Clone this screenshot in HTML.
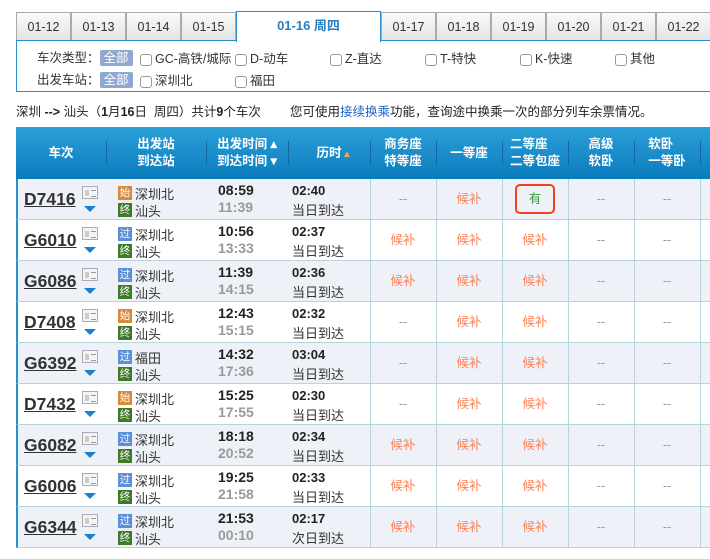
<!DOCTYPE html>
<html><head><meta charset="utf-8"><style>
*{margin:0;padding:0;box-sizing:border-box}
body{width:710px;height:559px;overflow:hidden;background:#fff;font-family:"Liberation Sans","Noto Sans CJK SC",sans-serif;font-size:12.5px;color:#333;position:relative}
.a{position:absolute}
.tab{position:absolute;top:12px;height:29px;width:55px;background:linear-gradient(#fafafa,#e3e3e3);border:1px solid #aaa;border-bottom:none;text-align:center;line-height:28px;font-size:12.5px;color:#333}
.filt{position:absolute;left:16px;top:40px;width:720px;height:52px;border:1px solid #2a8fc8}
.cb{display:inline-block;width:12px;height:12px;border:1px solid #999;border-radius:3px;vertical-align:-3px;margin-right:3px;background:#fff}
.all{display:inline-block;background:#8ea8d2;color:#fff;padding:0 4px;line-height:16px;border-radius:2px}
.hd{position:absolute;left:16px;top:127px;width:700px;height:52px;background:linear-gradient(#2ca0d8,#0a7bbd);color:#fff;font-weight:bold;font-size:12.5px}
.hd div{position:absolute;top:0;height:52px;display:flex;flex-direction:column;justify-content:center;align-items:center;line-height:17px}
.sep{position:absolute;top:14px;width:1px;height:24px;background:#1768a0}
.row{position:absolute;left:16px;width:700px;height:41px;border-bottom:1px solid #b9d3dc;border-left:2px solid #2a8fc8}
.row.s{background:#eef1f8}
.vl{position:absolute;top:0;width:1px;height:41px;background:#b9d3dc}
.tn{position:absolute;left:6px;top:10px;font-size:17.5px;font-weight:bold;text-decoration:underline;color:#333}
.card{position:absolute;left:64px;top:7px;width:16px;height:13px;border:1px solid #aab;background:#f4f4f4}
.card:before{content:"";position:absolute;left:2px;top:3px;width:4px;height:6px;background:#ccc}
.card:after{content:"";position:absolute;left:8px;top:3px;width:5px;height:5px;border-top:1px solid #999;border-bottom:1px solid #999}
.arr{position:absolute;left:66px;top:27px;width:0;height:0;border-left:6px solid transparent;border-right:6px solid transparent;border-top:6px solid #1a7fd0}
.ic{position:absolute;left:100px;width:14px;height:14px;font-size:10.5px;line-height:14px;text-align:center;color:#fff}
.st{position:absolute;left:117px;font-size:13px;color:#333}
.t1{position:absolute;left:200px;top:3px;font-size:14px;font-weight:bold;color:#222}
.t2{position:absolute;left:200px;top:20px;font-size:14px;font-weight:bold;color:#999}
.d1{position:absolute;left:274px;top:4px;font-size:13px;font-weight:bold;color:#222}
.d2{position:absolute;left:274px;top:21px;font-size:13px;color:#333}
.c{position:absolute;top:0;width:66px;height:41px;line-height:40px;text-align:center;font-size:12.5px}
.h{color:#ff7f50}.n{color:#999}
</style></head><body>
<div class="tab" style="left:16px">01-12</div>
<div class="tab" style="left:71px">01-13</div>
<div class="tab" style="left:126px">01-14</div>
<div class="tab" style="left:181px">01-15</div>
<div class="a" style="left:236px;top:11px;width:145px;height:31px;background:#fff;border:1px solid #2a8fc8;border-bottom:none;z-index:2;text-align:center;line-height:28px;color:#2a7fc0;font-weight:bold;font-size:13px">01-16 周四</div>
<div class="tab" style="left:381px">01-17</div>
<div class="tab" style="left:436px">01-18</div>
<div class="tab" style="left:491px">01-19</div>
<div class="tab" style="left:546px">01-20</div>
<div class="tab" style="left:601px">01-21</div>
<div class="tab" style="left:656px">01-22</div>
<div class="filt"></div>
<div class="a" style="left:37px;top:47px">车次类型：<span class="all">全部</span></div>
<div class="a" style="left:140px;top:48px"><span class="cb"></span>GC-高铁/城际</div>
<div class="a" style="left:235px;top:48px"><span class="cb"></span>D-动车</div>
<div class="a" style="left:330px;top:48px"><span class="cb"></span>Z-直达</div>
<div class="a" style="left:425px;top:48px"><span class="cb"></span>T-特快</div>
<div class="a" style="left:520px;top:48px"><span class="cb"></span>K-快速</div>
<div class="a" style="left:615px;top:48px"><span class="cb"></span>其他</div>
<div class="a" style="left:37px;top:69px">出发车站：<span class="all">全部</span></div>
<div class="a" style="left:140px;top:70px"><span class="cb"></span>深圳北</div>
<div class="a" style="left:235px;top:70px"><span class="cb"></span>福田</div>
<div class="a" style="left:16px;top:101px;font-size:12.5px;color:#222">深圳 <b>--&gt;</b> 汕头（<b>1</b>月<b>16</b>日&nbsp; 周四）共计<b>9</b>个车次</div>
<div class="a" style="left:290px;top:101px;font-size:12.5px;color:#222">您可使用<span style="color:#2266cc">接续换乘</span>功能，查询途中换乘一次的部分列车余票情况。</div>
<div class="hd">
<div style="left:0;width:90px">车次</div><span class="sep" style="left:90px"></span>
<div style="left:90px;width:100px">出发站<br>到达站</div><span class="sep" style="left:190px"></span>
<div style="left:190px;width:82px">出发时间 ▴<br>到达时间 ▾</div><span class="sep" style="left:272px"></span>
<div style="left:272px;width:82px">历时 <span style="color:#f4a460;font-size:10px;position:absolute;left:54px;top:19px">▲</span></div><span class="sep" style="left:354px"></span>
<div style="left:354px;width:66px">商务座<br>特等座</div><span class="sep" style="left:420px"></span>
<div style="left:420px;width:66px">一等座</div><span class="sep" style="left:486px"></span>
<div style="left:486px;width:66px">二等座<br>二等包座</div><span class="sep" style="left:552px"></span>
<div style="left:552px;width:66px">高级<br>软卧</div><span class="sep" style="left:618px"></span>
<div style="left:618px;width:66px">软卧<br>一等卧</div><span class="sep" style="left:684px"></span>
</div>
<div id="rows"></div>
<script>
var R=[["D7416","始","深圳北","08:59","11:39","02:40","当日到达",["--","候补","有","--","--"]],
["G6010","过","深圳北","10:56","13:33","02:37","当日到达",["候补","候补","候补","--","--"]],
["G6086","过","深圳北","11:39","14:15","02:36","当日到达",["候补","候补","候补","--","--"]],
["D7408","始","深圳北","12:43","15:15","02:32","当日到达",["--","候补","候补","--","--"]],
["G6392","过","福田","14:32","17:36","03:04","当日到达",["--","候补","候补","--","--"]],
["D7432","始","深圳北","15:25","17:55","02:30","当日到达",["--","候补","候补","--","--"]],
["G6082","过","深圳北","18:18","20:52","02:34","当日到达",["候补","候补","候补","--","--"]],
["G6006","过","深圳北","19:25","21:58","02:33","当日到达",["候补","候补","候补","--","--"]],
["G6344","过","深圳北","21:53","00:10","02:17","次日到达",["候补","候补","候补","--","--"]]];
var h="";
R.forEach(function(r,i){
var top=179+i*41;
h+='<div class="row'+(i%2==0?' s':'')+'" style="top:'+top+'px">';
h+='<span class="tn">'+r[0]+'</span><span class="card"></span><span class="arr"></span>';
var bg=r[1]=="始"?"#d9893b":"#5b8fd6";
h+='<span class="ic" style="top:7px;background:'+bg+'">'+r[1]+'</span><span class="st" style="top:5px">'+r[2]+'</span>';
h+='<span class="ic" style="top:24px;background:#3f7a2a">终</span><span class="st" style="top:22px">汕头</span>';
h+='<span class="t1">'+r[3]+'</span><span class="t2">'+r[4]+'</span><span class="d1">'+r[5]+'</span><span class="d2">'+r[6]+'</span>';
for(var k=0;k<5;k++){var x=352+k*66;var v=r[7][k];
h+='<span class="vl" style="left:'+x+'px"></span>';
var cls=v=="--"?"n":(v=="有"?"":"h");
h+='<span class="c '+cls+'" style="left:'+x+'px">'+(v=="有"?'<span style="display:inline-block;width:40px;height:30px;line-height:26px;margin-top:5px;border:2px solid #f04020;border-radius:5px;color:#3a9a3a">有</span>':v)+'</span>';}
h+='<span class="vl" style="left:682px"></span></div>';
});
document.getElementById("rows").innerHTML=h;
</script>
</body></html>
